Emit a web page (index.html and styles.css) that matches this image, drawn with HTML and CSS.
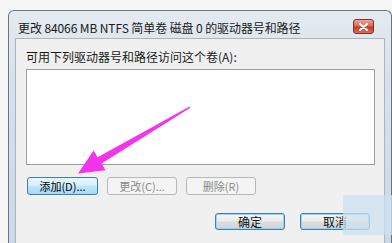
FILE: index.html
```html
<!DOCTYPE html>
<html lang="zh-CN">
<head>
<meta charset="utf-8">
<title>更改驱动器号和路径</title>
<link rel="stylesheet" href="styles.css">
</head>
<body>
<div class="page">
  <div class="window">
    <div class="titlebar">
      <span class="title">更改 84066 MB NTFS 简单卷 磁盘 0 的驱动器号和路径</span>
      <span class="close">
        <svg width="9" height="8" viewBox="0 0 9 8"><path d="M1 1 L8 7 M8 1 L1 7" stroke="#fff" stroke-width="2" stroke-linecap="round"/></svg>
      </span>
    </div>
    <div class="content">
      <div class="label">可用下列驱动器号和路径访问这个卷(A):</div>
      <div class="listbox"></div>
      <div class="actions">
        <button class="btn focus">添加(D)...</button>
        <button class="btn disabled">更改(C)...</button>
        <button class="btn disabled">删除(R)</button>
      </div>
      <div class="footer">
        <button class="btn default">确定</button>
        <button class="btn default">取消</button>
      </div>
    </div>
  </div>
  <div class="watermark"></div>
  <svg class="arrow" width="392" height="243" viewBox="0 0 392 243">
    <polygon fill="#f334ea" points="190.4,107.8 101.6,163.6 105.5,170.2 78,173.5 93.6,150.6 97.6,157.2 189.6,106.4"/>
  </svg>
</div>
</body>
</html>
```
FILE: styles.css
```css
* { box-sizing: border-box; }
html, body {
  margin: 0;
  padding: 0;
  background: #f7f7f7;
}
.page {
  position: relative;
  width: 392px;
  height: 243px;
  overflow: hidden;
  padding: 10px 0 0 8px;
  font-family: "Noto Sans CJK SC", "Open Sans", sans-serif;
}
.window {
  width: 384px;
  height: 240px;
  border: 1px solid #6e7479;
  border-bottom: none;
  border-radius: 6px 6px 0 0;
  background: linear-gradient(#e4eaf0, #d6e1ec 30%, #c9d9ea);
  padding: 0 6px 0 6px;
  display: flex;
  flex-direction: column;
}
.titlebar {
  height: 27px;
  padding: 6px 11px 0 3px;
  display: flex;
  align-items: center;
  justify-content: space-between;
}
.title {
  font-size: 12px;
  color: #1a1a1a;
  line-height: 14px;
  letter-spacing: -0.1px;
}
.close {
  width: 21px;
  height: 15px;
  border: 1px solid #7a3030;
  border-radius: 3px;
  background: linear-gradient(#e9a99a, #d96a55 45%, #c73a22 55%, #d8735c);
  display: flex;
  align-items: center;
  justify-content: center;
  margin-top: -2px;
}
.close svg { display: block; }
.content {
  flex: 1;
  background: #f0f0f0;
  border: 1px solid #a8b4c0;
  border-bottom: none;
  padding: 11px 9px 0 10px;
  display: flex;
  flex-direction: column;
}
.label {
  font-size: 12px;
  line-height: 14px;
  color: #1a1a1a;
}
.listbox {
  margin-top: 5px;
  height: 96px;
  background: #fff;
  border: 1px solid #9a9ea4;
}
.actions {
  margin-top: 12px;
  display: flex;
  gap: 9px;
  padding-left: 1px;
}
.footer {
  margin-top: 18px;
  display: flex;
  justify-content: flex-end;
  gap: 15px;
  padding-right: 5px;
}
.btn {
  font-family: "Noto Sans CJK SC", "Open Sans", sans-serif;
  font-size: 11px;
  line-height: 12px;
  width: 70px;
  height: 18px;
  padding: 0;
  border-radius: 3px;
  text-align: center;
}
.btn.focus {
  width: 71px;
  border: 1px solid #3c7fb1;
  background: linear-gradient(#eaf6fd, #d9f0fc 45%, #bee6fd 50%, #a7d9f5);
  color: #000;
}
.btn.disabled {
  border: 1px solid #b3b8bb;
  background: #f4f4f4;
  color: #8a8a8a;
}
.btn.default {
  height: 17px;
  border: 1px solid #3c7fb1;
  box-shadow: inset 0 0 0 1px #9bd1f2;
  background: linear-gradient(#f6f6f6, #ececec 45%, #dcdcdc 55%, #cfd6dc);
  color: #111;
  font-size: 12px;
}
.watermark {
  position: absolute;
  left: 343px;
  top: 195px;
  width: 49px;
  height: 40px;
  background: rgba(205, 226, 240, 0.75);
}
.arrow {
  position: absolute;
  left: 0;
  top: 0;
}
```
